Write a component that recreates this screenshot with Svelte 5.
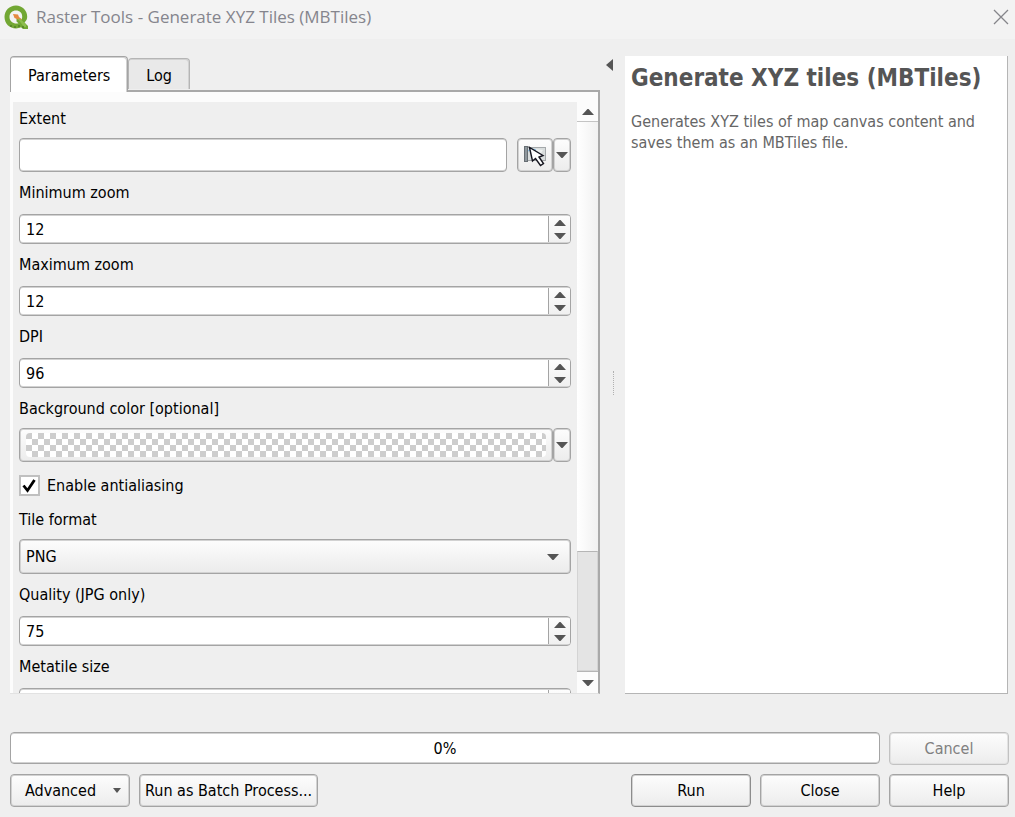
<script lang="ts">
  let extent = $state('');
  let antialiasing = $state(true);
  let format = $state('PNG');
  let activeTab = $state('Parameters');

  let zooms = $state([
    { id: 'min-zoom', label: 'Minimum zoom', value: 12 },
    { id: 'max-zoom', label: 'Maximum zoom', value: 12 },
    { id: 'dpi', label: 'DPI', value: 96 }
  ]);

  let tiles = $state([
    { id: 'quality', label: 'Quality (JPG only)', value: 75 },
    { id: 'metatile', label: 'Metatile size', value: 4 }
  ]);
</script>

{#snippet arrow(dir: string)}
  <svg class="arrow" width="12" height="6" viewBox="0 0 12 6" aria-hidden="true">
    <path d={dir === 'up' ? 'M0 6L5.5 0H6.5L12 6Z' : 'M0 0H12L6.5 6H5.5Z'} />
  </svg>
{/snippet}

{#snippet spin(field: { id: string; label: string; value: number })}
  <div class="field">
    <label for={field.id}>{field.label}</label>
    <div class="spin">
      <input id={field.id} type="text" inputmode="numeric" bind:value={field.value} />
      <div class="steps">
        <button type="button" aria-label="Increase" onclick={() => field.value++}>{@render arrow('up')}</button>
        <button type="button" aria-label="Decrease" onclick={() => field.value--}>{@render arrow('down')}</button>
      </div>
    </div>
  </div>
{/snippet}

<div class="dialog">
  <header class="titlebar">
    <svg width="26" height="26" viewBox="0 0 26 26" aria-hidden="true">
      <path
        fill="#72a733"
        fill-rule="evenodd"
        d="M13 1.5C6.500 1.500 1.500 6.500 1.500 13S6.500 24.500 13 24.500C15 24.500 16.500 24 18 23.300L20 25H25V22L21.500 18.500C23.500 16.500 24.200 15 24.200 12.500C24.200 6.500 19.300 1.500 13 1.500ZM13 6.500C16.800 6.500 19.200 9 19.200 12.500C19.200 13.700 19 14.700 18.300 15.600L16.500 14H13.500V17.500L15.500 19.300C11 20.500 6.500 17.500 6.500 13C6.500 9 9.300 6.500 13 6.500Z"
      />
      <path d="M10 10L15 10.500L16 13L19 15.500L17.500 17L14 15L11.500 14Z" fill="#e58a42" />
      <path d="M15 15L17 14.500L23 20.500V23H21Z" fill="#8cbd4c" />
      <path d="M7 22H9M11 23H13M15 22H17M19 23H21" stroke="#3f6b22" stroke-width="1" />
    </svg>
    <h1>Raster Tools - Generate XYZ Tiles (MBTiles)</h1>
    <button type="button" class="close" aria-label="Close window">
      <svg width="16" height="16" viewBox="0 0 16 16" aria-hidden="true">
        <path d="M1 1L15 15M15 1L1 15" fill="none" stroke="#85858a" stroke-width="1.3" />
      </svg>
    </button>
  </header>

  <main>
    <section class="left">
      <div class="tabs" role="tablist">
        {#each ['Parameters', 'Log'] as tab}
          <button
            type="button"
            role="tab"
            class="tab"
            class:active={activeTab === tab}
            aria-selected={activeTab === tab}
            onclick={() => (activeTab = tab)}
          >{tab}</button>
        {/each}
      </div>

      <div class="pane">
        <form class="fields">
          <div class="field tall">
            <label for="extent">Extent</label>
            <div class="row extent-row">
              <input id="extent" class="text" type="text" bind:value={extent} />
              <div class="split">
                <button type="button" class="btn pick" aria-label="Select extent on canvas">
                  <svg width="24" height="24" viewBox="0 0 24 24" aria-hidden="true">
                    <rect x="4" y="4.500" width="18.500" height="13" fill="#d9dddd" stroke="#a4a8aa" />
                    <path d="M12 6L20 7L17 12Z" fill="#eef1f0" />
                    <path d="M5 8L8 6L13 7" fill="none" stroke="#8fc3e6" stroke-width="1.5" />
                    <rect x="1.500" y="3.500" width="3" height="15" fill="#8e979d" stroke="#676e73" />
                    <path
                      d="M6.500 4.500L9.500 18L12.500 15.500L17.500 22.500L20.500 20.500L16 14L20 12.500Z"
                      fill="#fff"
                      stroke="#15151f"
                      stroke-width="1.4"
                    />
                  </svg>
                </button>
                <button type="button" class="btn drop" aria-label="Extent options">{@render arrow('down')}</button>
              </div>
            </div>
          </div>

          {#each zooms as field (field.id)}
            {@render spin(field)}
          {/each}

          <div class="field tall">
            <label for="background">Background color [optional]</label>
            <div class="split">
              <button id="background" type="button" class="btn color">
                <span class="checker"></span>
              </button>
              <button type="button" class="btn drop" aria-label="Color options">{@render arrow('down')}</button>
            </div>
          </div>

          <label class="check">
            <input type="checkbox" bind:checked={antialiasing} />
            Enable antialiasing
          </label>

          <div class="field tall">
            <label for="format">Tile format</label>
            <div class="select">
              <select id="format" bind:value={format}>
                <option>PNG</option>
                <option>JPG</option>
              </select>
              {@render arrow('down')}
            </div>
          </div>

          {#each tiles as field (field.id)}
            {@render spin(field)}
          {/each}
        </form>

        <div class="scrollbar">
          <button type="button" aria-label="Scroll up">{@render arrow('up')}</button>
          <div class="thumb"></div>
          <div class="track"></div>
          <button type="button" aria-label="Scroll down">{@render arrow('down')}</button>
        </div>
      </div>
    </section>

    <div class="splitter">
      <button type="button" aria-label="Collapse help">
        <svg width="7" height="12" viewBox="0 0 7 12" aria-hidden="true"><path d="M7 0V12L0 6Z" fill="#555" /></svg>
      </button>
      <span class="grip"></span>
    </div>

    <aside class="help">
      <h2>Generate XYZ tiles (MBTiles)</h2>
      <p>Generates XYZ tiles of map canvas content and saves them as an MBTiles file.</p>
    </aside>
  </main>

  <footer>
    <div class="row">
      <div class="progress" role="progressbar" aria-label="Progress" aria-valuenow="0" aria-valuemin="0" aria-valuemax="100">0%</div>
      <button type="button" class="btn wide" disabled>Cancel</button>
    </div>
    <div class="row">
      <button type="button" class="btn wide menu">Advanced
        <svg width="8" height="5" viewBox="0 0 8 5" aria-hidden="true"><path d="M0 0H8L4 5Z" fill="#555" /></svg>
      </button>
      <button type="button" class="btn batch">Run as Batch Process...</button>
      <span class="spacer"></span>
      <button type="button" class="btn wide default">Run</button>
      <button type="button" class="btn wide">Close</button>
      <button type="button" class="btn wide">Help</button>
    </div>
  </footer>
</div>

<style>
  :global(body) {
    margin: 0;
  }

  .dialog {
    --border: #a4a4a4;
    --soft: #d2d2d2;
    display: flex;
    flex-direction: column;
    height: 100vh;
    overflow: hidden;
    background: #efefef;
    color: #000;
    font: 16px/22px 'DejaVu Sans Condensed', 'DejaVu Sans', sans-serif;
  }

  .dialog * {
    box-sizing: border-box;
  }

  button,
  input,
  select {
    margin: 0;
    padding: 0;
    font: inherit;
    color: inherit;
  }

  svg {
    display: block;
    flex: none;
  }

  .arrow {
    fill: #555;
  }

  .titlebar {
    display: flex;
    align-items: center;
    gap: 7px;
    height: 39px;
    padding: 0 6px 6px 3px;
    background: #f3f3f3;
  }

  .titlebar h1 {
    flex: 1;
    margin: 0;
    color: #85858d;
    font: 17px/22px 'Open Sans', 'Noto Sans', sans-serif;
  }

  .close {
    border: 0;
    background: none;
  }

  main {
    flex: 1;
    display: flex;
    min-height: 0;
    padding: 17px 7px 0 10px;
  }

  .left {
    flex: 590;
    display: flex;
    flex-direction: column;
    min-width: 0;
  }

  .tabs {
    display: flex;
    align-items: flex-end;
  }

  .tab {
    height: 31px;
    margin-bottom: 1px;
    padding: 3px 17px 0;
    border: 1px solid #b5b5b5;
    border-bottom: 0;
    border-radius: 4px 4px 0 0;
    background: #e9e9e9;
    box-shadow: inset -1px 1px var(--soft);
  }

  .tab.active {
    z-index: 1;
    height: 36px;
    margin-bottom: -2px;
    padding-top: 2px;
    border-color: var(--border);
    background: #fff;
  }

  .pane {
    flex: 1;
    display: flex;
    min-height: 0;
    padding: 10px 0 0 3px;
    border: 2px solid #a9a9a9;
    border-width: 2px 2px 0 0;
    border-bottom: 1px solid #e2e2e2;
    background: #fcfcfc;
  }

  .fields {
    flex: 1;
    display: flex;
    flex-direction: column;
    gap: 10px;
    min-width: 0;
    padding: 6px 6px 0;
    overflow: hidden;
    background: #efefef;
  }

  .field {
    flex: none;
    display: flex;
    flex-direction: column;
    gap: 10px;
  }

  .field.tall {
    gap: 8px;
  }

  .row {
    display: flex;
    gap: 9px;
  }

  .extent-row {
    gap: 10px;
  }

  .text,
  .spin,
  .progress {
    border: 1px solid var(--border);
    border-radius: 4px;
    background: #fff;
    box-shadow: inset 0 1px var(--soft), inset 0 -1px var(--soft);
  }

  .text {
    flex: 1;
    min-width: 0;
    height: 34px;
    padding: 0 6px;
  }

  .spin {
    display: flex;
    height: 30px;
    padding: 1px 0;
    overflow: hidden;
  }

  .spin input {
    flex: 1;
    min-width: 0;
    padding: 2px 6px 0;
    border: 0;
    background: none;
  }

  .steps {
    display: flex;
    flex-direction: column;
    width: 22px;
    border-left: 1px solid var(--border);
    background: linear-gradient(#fdfdfd, #f0f0f0);
  }

  .steps button {
    flex: 1;
    display: grid;
    place-items: center;
    border: 0;
    background: none;
  }

  .btn {
    display: flex;
    align-items: center;
    justify-content: center;
    height: 33px;
    border: 1px solid var(--border);
    border-radius: 4px;
    background: linear-gradient(#fdfdfd, #ececec);
    box-shadow: inset 0 0 0 1px var(--soft);
  }

  .btn:disabled {
    border-color: #c2c2c2;
    box-shadow: inset 0 0 0 1px #e2e2e2;
    color: #808080;
  }

  .split {
    display: flex;
  }

  .split .btn {
    height: 34px;
  }

  .split .pick {
    width: 36px;
  }

  .split .drop {
    width: 18px;
  }

  .color {
    flex: 1;
    padding: 0 6px;
  }

  .checker {
    flex: 1;
    height: 24px;
    border-radius: 4px;
    background: repeating-conic-gradient(#fff 0 25%, #cdcdcd 0 50%) 0 0 / 12px 12px;
  }

  .check {
    flex: none;
    display: flex;
    align-items: center;
    gap: 7px;
    height: 27px;
  }

  .check input {
    appearance: none;
    width: 21px;
    height: 21px;
    border: 2px solid #c0c0c0;
    background: #fff;
  }

  .check input:checked {
    background: #fff url("data:image/svg+xml,%3Csvg xmlns='http://www.w3.org/2000/svg' viewBox='0 0 17 17'%3E%3Cpath d='M2.500 8.500L6.500 13.500L13.500 3' fill='none' stroke='%23000' stroke-width='2.800'/%3E%3C/svg%3E") center / 17px 17px no-repeat;
  }

  .select {
    display: grid;
    align-items: center;
  }

  .select select {
    grid-area: 1 / 1;
    appearance: none;
    height: 35px;
    padding: 0 6px;
    border: 1px solid var(--border);
    border-radius: 4px;
    background: linear-gradient(#fdfdfd, #ebebeb);
    box-shadow: inset 0 0 0 1px var(--soft);
  }

  .select .arrow {
    grid-area: 1 / 1;
    justify-self: end;
    margin-right: 12px;
    pointer-events: none;
  }

  .scrollbar {
    display: flex;
    flex-direction: column;
    width: 21px;
  }

  .scrollbar button {
    display: grid;
    place-items: center;
    height: 20px;
    border: 0;
    border-bottom: 1px solid #c4c4c4;
    background: #fcfcfc;
  }

  .scrollbar button:last-child {
    height: 22px;
    border-top: 1px solid #b5b5b5;
    border-bottom: 0;
  }

  .thumb {
    flex: 430;
    background: linear-gradient(90deg, #fff, #f1f1f1);
  }

  .track {
    flex: 118;
    border: 1px solid #d4d4d4;
    border-top-color: #b5b5b5;
    background: #e4e4e4;
  }

  .splitter {
    display: flex;
    flex-direction: column;
    width: 25px;
    padding: 3px 0 0 6px;
  }

  .splitter button {
    align-self: flex-start;
    border: 0;
    background: none;
  }

  .grip {
    height: 24px;
    margin: auto 0 auto 7px;
    border-left: 1px dotted #b0b0b0;
  }

  .help {
    flex: 370;
    min-width: 0;
    padding: 6px;
    border: 1px solid #b5b5b5;
    border-width: 0 1px 1px 0;
    background: #fff;
    color: #666;
  }

  .help h2 {
    margin: 0 0 17px;
    color: #555;
    font-size: 24px;
    line-height: 32px;
    white-space: nowrap;
  }

  .help p {
    margin: 0;
    line-height: 21px;
  }

  footer {
    display: flex;
    flex-direction: column;
    gap: 9px;
    padding: 38px 6px 10px 10px;
  }

  .progress {
    flex: 1;
    height: 32px;
    line-height: 31px;
    text-align: center;
  }

  .wide {
    width: 120px;
  }

  .default {
    border-color: #8c8c8c;
  }

  .menu {
    gap: 17px;
    padding-left: 6px;
  }

  .batch {
    padding: 0 5px;
  }

  .spacer {
    flex: 1;
  }
</style>
